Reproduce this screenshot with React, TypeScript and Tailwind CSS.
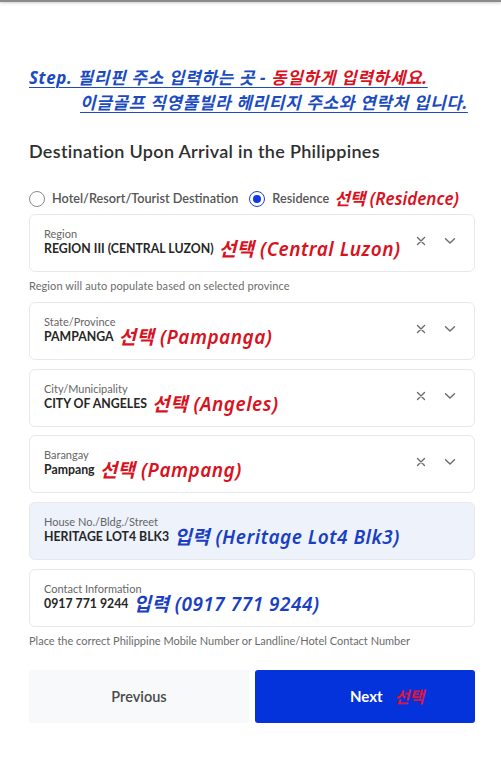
import React from "react";

const ui = { fontFamily: "Lato, 'Noto Sans', 'Liberation Sans', sans-serif" };
const note = { fontFamily: "'Noto Sans', 'Noto Sans CJK KR', sans-serif" };

function XIcon() {
  return (
    <svg width="10" height="10" viewBox="0 0 10 10" className="shrink-0">
      <path d="M1.5 1.5 L8.5 8.5 M8.5 1.5 L1.5 8.5" stroke="#6b6b6b" strokeWidth="1.4" strokeLinecap="round" />
    </svg>
  );
}
function Chevron() {
  return (
    <svg width="12" height="8" viewBox="0 0 12 8" className="shrink-0">
      <path d="M1.5 1.8 L6 6 L10.5 1.8" stroke="#6b6b6b" strokeWidth="1.4" fill="none" strokeLinecap="round" strokeLinejoin="round" />
    </svg>
  );
}

function Field({
  label,
  value,
  noteText,
  noteColor,
  select,
  bg,
  mt,
}: {
  label: string;
  value: string;
  noteText: string;
  noteColor: string;
  select?: boolean;
  bg?: string;
  mt: string;
}) {
  return (
    <div
      className={`${mt} ${bg ?? "bg-white"} h-[58px] rounded-[6px] border border-[#e6e8ec] flex items-center pl-[14px] pr-[18px]`}
    >
      <div className="flex-1 flex flex-col mt-[-2px]">
        <div className="text-[11px] leading-[13px] text-[#666]" style={ui}>{label}</div>
        <div className="flex items-center mt-[1px] whitespace-nowrap h-[16px]">
          <span className="text-[12.3px] font-bold text-[#262626] leading-[16px]" style={ui}>{value}</span>
          <span className={`ml-[5px] text-[19px] font-semibold italic leading-[16px] tracking-[0.5px] ${noteColor}`} style={note}>{noteText}</span>
        </div>
      </div>
      {select && (
        <div className="flex items-center gap-[18px] mt-[-4px]">
          <XIcon />
          <Chevron />
        </div>
      )}
    </div>
  );
}

export default function App() {
  return (
    <div className="w-[501px] h-[758px] bg-white relative overflow-hidden">
      <div className="h-[2px] bg-[#8a8a8a] shadow-[0_1px_3px_rgba(0,0,0,0.25)]" />
      <div className="pl-[29px] pr-[26px] flex flex-col">
        <div className="mt-[63px] flex flex-col text-[17px] font-bold italic leading-[25px] tracking-[0.6px]" style={note}>
          <div className="underline decoration-[1px] underline-offset-[3px] text-[#1b4bbf] decoration-[#1b4bbf]">
            Step. 필리핀 주소 입력하는 곳 - <span className="text-[#d8121e]">동일하게 입력하세요.</span>
          </div>
          <div className="pl-[51px] underline decoration-[1px] underline-offset-[3px] text-[#1b4bbf]">
            이글골프 직영풀빌라 헤리티지 주소와 연락처 입니다.
          </div>
        </div>

        <div className="mt-[25px] text-[18px] font-semibold text-[#2f2f2f] leading-[22px] tracking-[0.3px]" style={ui}>
          Destination Upon Arrival in the Philippines
        </div>

        <div className="mt-[26px] flex items-center h-[22px] whitespace-nowrap">
          <span className="w-[16px] h-[16px] rounded-full border-[1.5px] border-[#8a8a8a] bg-white shrink-0" />
          <span className="ml-[7px] shrink-0 text-[12.7px] text-[#555] font-semibold" style={ui}>Hotel/Resort/Tourist Destination</span>
          <span className="ml-[11px] w-[16px] h-[16px] rounded-full border-[1.5px] border-[#1d45d6] flex items-center justify-center shrink-0">
            <span className="w-[8px] h-[8px] rounded-full bg-[#1238e0]" />
          </span>
          <span className="ml-[7px] shrink-0 text-[12.7px] text-[#555] font-semibold" style={ui}>Residence</span>
          <span className="ml-[5px] shrink-0 text-[17px] font-semibold italic text-[#d8121e]" style={note}>선택 (Residence)</span>
        </div>

        <Field mt="mt-[4px]" label="Region" value="REGION III (CENTRAL LUZON)" noteText="선택 (Central Luzon)" noteColor="text-[#d8121e]" select />
        <div className="mt-[6px] text-[11px] text-[#6b6b6b] leading-[16px] tracking-[0.1px]" style={ui}>
          Region will auto populate based on selected province
        </div>
        <Field mt="mt-[8px]" label="State/Province" value="PAMPANGA" noteText="선택 (Pampanga)" noteColor="text-[#d8121e]" select />
        <Field mt="mt-[9px]" label="City/Municipality" value="CITY OF ANGELES" noteText="선택 (Angeles)" noteColor="text-[#d8121e]" select />
        <Field mt="mt-[8px]" label="Barangay" value="Pampang" noteText="선택 (Pampang)" noteColor="text-[#d8121e]" select />
        <Field mt="mt-[9px]" label="House No./Bldg./Street" value="HERITAGE LOT4 BLK3" noteText="입력 (Heritage Lot4 Blk3)" noteColor="text-[#1b3fc4]" bg="bg-[#edf2fb]" />
        <Field mt="mt-[9px]" label="Contact Information" value="0917 771 9244" noteText="입력 (0917 771 9244)" noteColor="text-[#1b3fc4]" />
        <div className="mt-[6px] text-[11px] text-[#6b6b6b] leading-[16px]" style={ui}>
          Place the correct Philippine Mobile Number or Landline/Hotel Contact Number
        </div>

        <div className="mt-[21px] grid grid-cols-2 gap-[6px] h-[53px]">
          <div className="bg-[#f8f9fb] flex items-center justify-center text-[14.5px] font-semibold text-[#4a4a4a]" style={ui}>
            Previous
          </div>
          <div className="bg-[#0433dc] rounded-[3px] flex items-center justify-center pl-[44px]">
            <span className="text-[15px] font-bold text-white" style={ui}>Next</span>
            <span className="ml-[12px] text-[16px] font-bold italic text-[#e0143c]" style={note}>선택</span>
          </div>
        </div>
      </div>
    </div>
  );
}
